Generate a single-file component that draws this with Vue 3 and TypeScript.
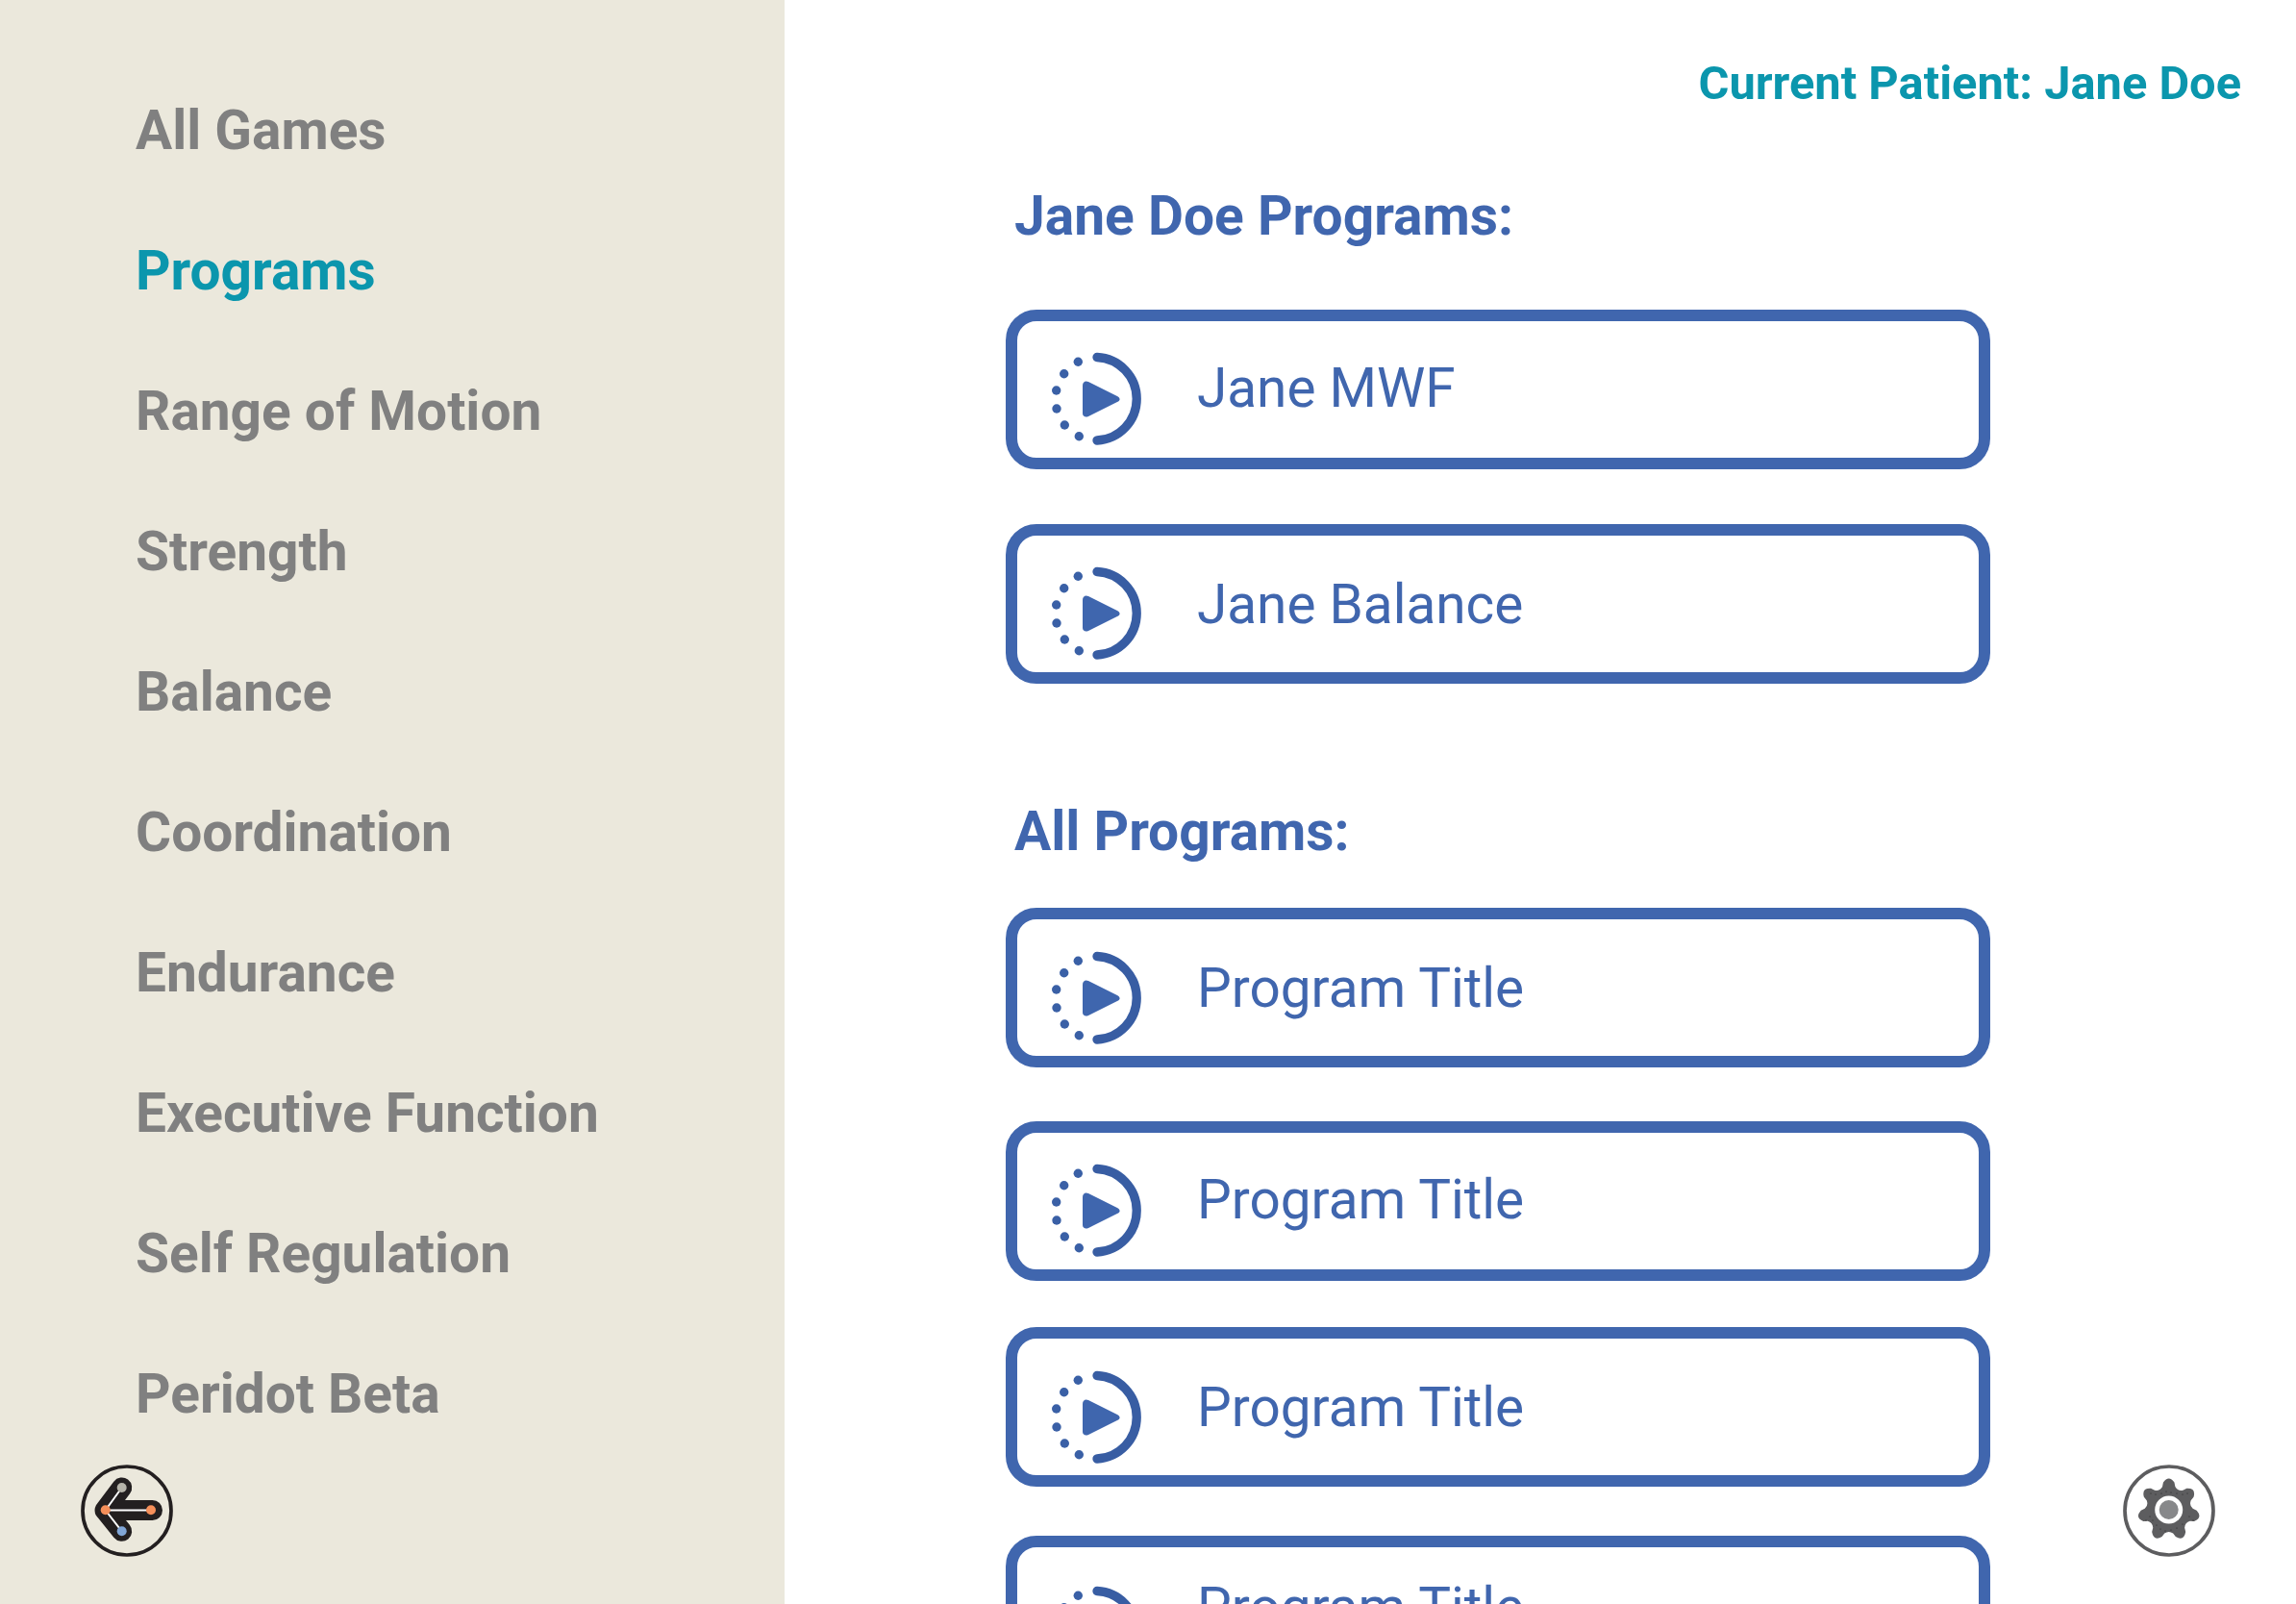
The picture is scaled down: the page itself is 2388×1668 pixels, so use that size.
<script setup lang="ts">
const navItems = [
  'All Games',
  'Programs',
  'Range of Motion',
  'Strength',
  'Balance',
  'Coordination',
  'Endurance',
  'Executive Function',
  'Self Regulation',
  'Peridot Beta',
];

const dots = [
  [29.3, 11.3], [14.7, 23.7], [6.7, 41], [7, 60], [15.3, 77], [30.3, 88.7],
];

// the rows in the design aren't evenly spaced, nudges keep them where they were placed
const patientPrograms = [
  { title: 'Jane MWF', top: 0, icon: 0, text: 0 },
  { title: 'Jane Balance', top: 57, icon: 0, text: 2 },
];

const allPrograms = [
  { title: 'Program Title', top: 0, icon: 1, text: 2 },
  { title: 'Program Title', top: 56, icon: 0, text: 0 },
  { title: 'Program Title', top: 48, icon: 1, text: 2 },
  { title: 'Program Title', top: 51, icon: 8, text: -7 },
];

function polar(cx: number, cy: number, r: number, a: number): string {
  return `${(cx + r * Math.cos(a)).toFixed(2)} ${(cy + r * Math.sin(a)).toFixed(2)}`;
}

function gearPath(cx: number, cy: number): string {
  const step = (Math.PI * 2) / 7;
  let d = '';
  for (let k = 0; k < 7; k++) {
    const a = -Math.PI / 2 + k * step;
    d += k === 0 ? `M${polar(cx, cy, 25, a - 0.27)}` : `L${polar(cx, cy, 25, a - 0.27)}`;
    d += `L${polar(cx, cy, 29, a - 0.2)}`;
    d += `Q${polar(cx, cy, 36.5, a)} ${polar(cx, cy, 29, a + 0.2)}`;
    d += `L${polar(cx, cy, 25, a + 0.27)}`;
    d += `Q${polar(cx, cy, 21.5, a + step / 2)} ${polar(cx, cy, 25, a + step - 0.27)}`;
  }
  return `${d}Z`;
}

const gear = gearPath(49.7, 49);

const gearSpecks = [
  [31, 32], [36, 33], [42, 32], [47, 30], [52, 31], [58, 32], [64, 33], [69, 32],
  [30, 56], [26, 60], [33, 60], [37, 65], [41, 69], [46, 71], [52, 70], [58, 68], [64, 64], [71, 56], [75, 60],
];
</script>

<template>
  <div class="screen">
    <svg class="defs" width="0" height="0">
      <symbol id="play-icon" viewBox="0 0 100 100">
        <circle v-for="(d, i) in dots" :key="i" :cx="d[0]" :cy="d[1]" r="4.7" fill="#3a60a6" />
        <path d="M49 6.500A43.300 43.300 0 0 1 49 93" fill="none" stroke="#385da3" stroke-width="9.300" stroke-linecap="round" />
        <path d="M34 36C34 32 37 30.500 40 32L70 47C73.500 49 73.500 51.500 70 53L40 68C37 69.500 34 68 34 65Z" fill="#3f66ae" />
      </symbol>
    </svg>

    <aside class="sidebar">
      <nav class="nav">
        <a v-for="item in navItems" :key="item" class="nav-item" :class="{ active: item === 'Programs' }">{{ item }}</a>
      </nav>
      <svg class="back-icon" width="100" height="100" viewBox="0 0 100 100">
        <circle cx="50" cy="50" r="46" fill="none" stroke="#231f20" stroke-width="3.700" />
        <path d="M76.500 49.500H27M27 49.500L44.700 26M27 49.500L44.700 71.300" fill="none" stroke="#231f20" stroke-width="21" stroke-linecap="round" stroke-linejoin="round" />
        <path d="M75 49.500H27.700L44.700 26M27.700 49.500L44.700 71.300" fill="none" stroke="#fff" stroke-width="2" />
        <circle cx="44.700" cy="26" r="5" fill="#b5b3a9" />
        <circle cx="27.700" cy="49.300" r="5" fill="#f58f5a" />
        <circle cx="44.700" cy="71.300" r="5" fill="#80a5d6" />
        <circle cx="75" cy="49.300" r="5" fill="#f58f5a" />
      </svg>
    </aside>

    <main class="content">
      <div class="patient">Current Patient: Jane Doe</div>

      <section class="group first">
        <h2 class="group-title">Jane Doe Programs:</h2>
        <button v-for="p in patientPrograms" :key="p.title" class="program" :style="{ marginTop: p.top + 'px' }">
          <svg class="play" width="100" height="100" :style="{ transform: `translateY(${p.icon}px)` }"><use href="#play-icon" /></svg>
          <span class="program-title" :style="{ transform: `translateY(${p.text}px)` }">{{ p.title }}</span>
        </button>
      </section>

      <section class="group second">
        <h2 class="group-title">All Programs:</h2>
        <button v-for="(p, i) in allPrograms" :key="i" class="program" :style="{ marginTop: p.top + 'px' }">
          <svg class="play" width="100" height="100" :style="{ transform: `translateY(${p.icon}px)` }"><use href="#play-icon" /></svg>
          <span class="program-title" :style="{ transform: `translateY(${p.text}px)` }">{{ p.title }}</span>
        </button>
      </section>

      <svg class="gear-icon" width="100" height="100" viewBox="0 0 100 100">
        <circle cx="50" cy="50" r="46" fill="none" stroke="#5d5d5f" stroke-width="3.700" />
        <path :d="gear" fill="#5d5d5f" />
        <circle v-for="(s, i) in gearSpecks" :key="i" :cx="s[0]" :cy="s[1]" r="0.5" fill="#1c1c1e" />
        <circle cx="49.700" cy="49" r="14.500" fill="#fff" />
        <circle cx="49.700" cy="49" r="10" fill="#87888a" />
      </svg>
    </main>
  </div>
</template>

<style>
html,
body {
  margin: 0;
  overflow: hidden;
}
</style>

<style scoped>
.screen {
  display: flex;
  width: 2388px;
  height: 1668px;
  overflow: hidden;
  font-family: Roboto, sans-serif;
  background: #fff;
}
.defs {
  position: absolute;
}
.sidebar {
  position: relative;
  flex: 0 0 816px;
  background: #ebe8dc;
}
.nav {
  display: flex;
  flex-direction: column;
  padding: 71px 0 0 141px;
}
.nav-item {
  height: 146px;
  line-height: 130px;
  font-size: 56.8px;
  font-weight: 700;
  color: #808080;
}
.nav-item.active {
  color: #0b96ad;
}
.back-icon {
  position: absolute;
  left: 82px;
  top: 1521px;
}
.content {
  position: relative;
  flex: 1;
  padding-left: 230px;
}
.patient {
  position: absolute;
  top: 58px;
  right: 57px;
  font-size: 48.8px;
  font-weight: 700;
  color: #0b96ad;
}
.group {
  display: flex;
  flex-direction: column;
  width: 1024px;
}
.first {
  padding-top: 193px;
}
.second {
  margin-top: 122px;
}
.group-title {
  margin: 0 0 65px 9px;
  font-size: 56.9px;
  line-height: 64px;
  font-weight: 700;
  color: #4066ae;
}
.second .group-title {
  margin-bottom: 47px;
}
.program {
  display: flex;
  flex: none;
  align-items: center;
  height: 166px;
  padding: 0 0 0 34px;
  border: 12px solid #4066ae;
  border-radius: 32px;
  background: #fff;
  font-family: inherit;
}
.play {
  flex: none;
  margin-top: 20px;
}
.program-title {
  margin-left: 53px;
  margin-top: -4px;
  font-size: 56.7px;
  color: #4066ae;
}
.gear-icon {
  position: absolute;
  right: 82px;
  top: 1521px;
}
</style>
